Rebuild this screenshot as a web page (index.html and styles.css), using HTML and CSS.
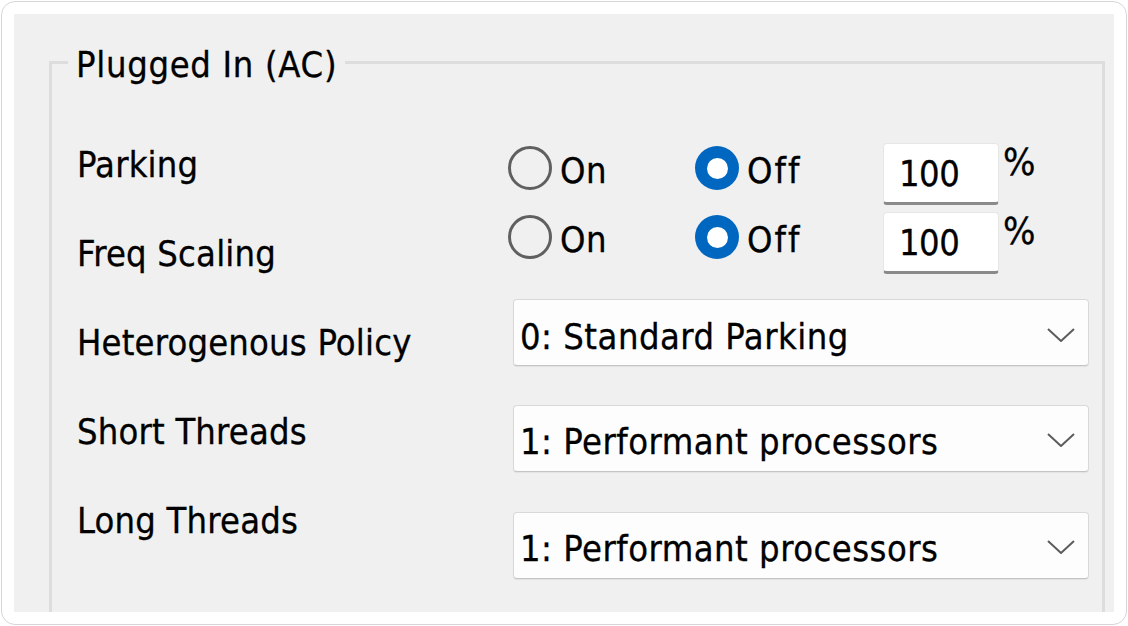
FILE: index.html
```html
<!DOCTYPE html>
<html>
<head>
<meta charset="utf-8">
<title>Plugged In (AC)</title>
<link rel="stylesheet" href="styles.css">
</head>
<body>
<div class="frame">
  <div class="panel">
    <fieldset class="group">
      <legend class="group-title">Plugged In (AC)</legend>
      <div class="group-body">
        <div class="labels">
          <div class="label">Parking</div>
          <div class="label">Freq Scaling</div>
          <div class="label">Heterogenous Policy</div>
          <div class="label">Short Threads</div>
          <div class="label">Long Threads</div>
        </div>
        <div class="controls">
          <div class="radio-row">
            <div class="option"><span class="radio"></span><span class="opt-text">On</span></div>
            <div class="option option-off"><span class="radio checked"></span><span class="opt-text">Off</span></div>
            <div class="numbox">100</div>
            <div class="unit">%</div>
          </div>
          <div class="radio-row">
            <div class="option"><span class="radio"></span><span class="opt-text">On</span></div>
            <div class="option option-off"><span class="radio checked"></span><span class="opt-text">Off</span></div>
            <div class="numbox">100</div>
            <div class="unit">%</div>
          </div>
          <div class="select select-first">
            <span class="select-text">0: Standard Parking</span>
            <svg class="chevron" width="28" height="14" viewBox="0 0 28 14"><path d="M1 1 L14 13 L27 1" fill="none" stroke="#5c5c5c" stroke-width="2"/></svg>
          </div>
          <div class="select">
            <span class="select-text">1: Performant processors</span>
            <svg class="chevron" width="28" height="14" viewBox="0 0 28 14"><path d="M1 1 L14 13 L27 1" fill="none" stroke="#5c5c5c" stroke-width="2"/></svg>
          </div>
          <div class="select select-last">
            <span class="select-text">1: Performant processors</span>
            <svg class="chevron" width="28" height="14" viewBox="0 0 28 14"><path d="M1 1 L14 13 L27 1" fill="none" stroke="#5c5c5c" stroke-width="2"/></svg>
          </div>
        </div>
      </div>
    </fieldset>
  </div>
</div>
</body>
</html>
```
FILE: styles.css
```css
* { box-sizing: border-box; }
html, body { margin: 0; padding: 0; background: #ffffff; }
body {
  font-family: "DejaVu Sans Condensed", "DejaVu Sans", sans-serif;
  font-size: 36px;
  letter-spacing: 0.5px;
  color: #000000;
  -webkit-text-stroke: 0.3px #000000;
}
.frame {
  width: 1126px;
  height: 624px;
  margin: 1px 0 0 1px;
  border: 1px solid #d6d6d6;
  border-radius: 14px;
  padding: 12px;
  background: #ffffff;
}
.panel {
  width: 100%;
  height: 100%;
  background: #f0f0f0;
  overflow: hidden;
  padding: 24px 9px 0 35px;
}
.group {
  margin: 0;
  height: 640px;
  border: 3px solid #dddddd;
  padding: 0 13px 0 25px;
  min-width: 0;
}
.group-title {
  margin-left: -9px;
  padding: 6px 8px 0 8px;
  line-height: 42px;
  letter-spacing: 0.7px;
}
.group-body {
  display: flex;
  padding-top: 57px;
}
.labels {
  width: 431px;
  flex: none;
  display: flex;
  flex-direction: column;
  gap: 47px;
  padding-top: 1px;
  letter-spacing: 0.2px;
}
.label { line-height: 42px; white-space: nowrap; }
.controls {
  flex: 1;
  display: flex;
  flex-direction: column;
}
.radio-row {
  display: flex;
  align-items: flex-start;
  height: 62px;
}
.radio-row + .radio-row { margin-top: 7px; }
.option {
  width: 187px;
  flex: none;
  display: flex;
  align-items: flex-start;
  gap: 8px;
}
.option-off { width: 188px; }
.radio {
  width: 44px;
  height: 44px;
  flex: none;
  margin-top: 3px;
  border: 3px solid #606060;
  border-radius: 50%;
  display: flex;
  align-items: center;
  justify-content: center;
}
.radio.checked {
  border: none;
  background: #0067c0;
}
.radio.checked::after {
  content: "";
  width: 21px;
  height: 21px;
  border-radius: 50%;
  background: #ffffff;
}
.opt-text { line-height: 42px; margin-top: 7px; }
.option-off .opt-text { letter-spacing: 2px; }
.numbox {
  width: 116px;
  height: 62px;
  flex: none;
  background: #ffffff;
  border: 1px solid #e6e6e6;
  border-bottom: 3px solid #8a8a8a;
  border-radius: 4px;
  padding: 9px 0 0 15px;
  line-height: 42px;
  letter-spacing: -0.5px;
}
.unit {
  margin-left: 4px;
  margin-top: -2px;
  line-height: 42px;
  font-size: 38px;
}
.select {
  width: 576px;
  height: 67px;
  margin-left: 5px;
  margin-top: 39px;
  display: flex;
  align-items: flex-start;
  justify-content: space-between;
  background: #fdfdfd;
  border: 1px solid #d9d9d9;
  border-bottom-color: #c4c4c4;
  border-radius: 4px;
  box-shadow: 0 1px 1px rgba(0, 0, 0, 0.06);
  padding: 15px 13px 0 6px;
}
.select-first { margin-top: 25px; padding-top: 16px; }
.select-last { margin-top: 40px; }
.select-text { line-height: 42px; white-space: nowrap; }
.chevron { margin-top: 12px; flex: none; }
```
